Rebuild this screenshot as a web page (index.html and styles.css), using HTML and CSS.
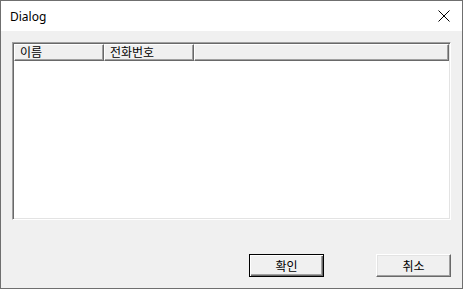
FILE: index.html
```html
<!DOCTYPE html>
<html lang="ko">
<head>
<meta charset="utf-8">
<link rel="stylesheet" href="styles.css">
</head>
<body>
<div class="window">
  <div class="titlebar">
    <span class="title">Dialog</span>
    <svg class="close" width="12" height="12" viewBox="0 0 12 12"><path d="M0.5 0.5 L11.5 11.5 M11.5 0.5 L0.5 11.5" stroke="#000" stroke-width="1" fill="none"/></svg>
  </div>
  <div class="content">
    <div class="list">
      <div class="header">
        <div class="col c1">이름</div>
        <div class="col c2">전화번호</div>
        <div class="col c3"></div>
      </div>
      <div class="rows"></div>
    </div>
    <div class="buttons">
      <button class="btn default">확인</button>
      <button class="btn">취소</button>
    </div>
  </div>
</div>
</body>
</html>
```
FILE: styles.css
```css
html, body { margin: 0; padding: 0; background: #f0f0f0; }
.window {
  width: 463px; height: 289px; box-sizing: border-box;
  border: 1px solid #6f6f6f;
  display: flex; flex-direction: column;
  font-family: "Noto Sans", "Noto Sans CJK KR", sans-serif;
}
.titlebar {
  height: 30px; background: #fff;
  display: flex; align-items: center; justify-content: space-between;
  padding: 0 12px 0 9px;
}
.title { font-size: 12px; color: #000; }
.close { display: block; }
.content {
  flex: 1; background: #f0f0f0;
  padding: 11px 11px 0 11px;
  display: flex; flex-direction: column;
}
.list {
  height: 178px; box-sizing: border-box;
  background: #fff;
  border-top: 1px solid #a0a0a0; border-left: 1px solid #a0a0a0;
  border-right: 1px solid #fff; border-bottom: 1px solid #fff;
  box-shadow: inset 1px 1px 0 #696969, inset -1px -1px 0 #e3e3e3;
  padding: 1px;
  display: flex; flex-direction: column;
}
.header { display: flex; height: 17px; background: #f0f0f0; }
.col {
  box-sizing: border-box; height: 17px;
  border-left: 1px solid #fff; border-top: 1px solid #fff;
  border-right: 1px solid #696969; border-bottom: 1px solid #696969;
  box-shadow: inset -1px -1px 0 #a0a0a0;
  font-family: "Noto Sans CJK KR", sans-serif; font-size: 12px; line-height: 14px;
  padding-left: 5px; color: #000;
}
.c1 { width: 90px; }
.c2 { width: 90px; }
.c3 { flex: 1; }
.rows { flex: 1; }
.buttons {
  display: flex; justify-content: flex-end; gap: 52px;
  margin-top: 34px;
}
.btn {
  width: 75px; height: 23px; box-sizing: border-box; margin: 0; padding: 0;
  background: #f0f0f0;
  border-top: 1px solid #fff; border-left: 1px solid #fff;
  border-right: 1px solid #696969; border-bottom: 1px solid #696969;
  box-shadow: inset -1px -1px 0 #a0a0a0, inset 1px 1px 0 #e3e3e3;
  font-family: "Noto Sans CJK KR", sans-serif; font-size: 12px; color: #000;
}
.btn.default {
  border: 1px solid #000;
  box-shadow: inset 1px 1px 0 #fff, inset -1px -1px 0 #696969, inset -2px -2px 0 #a0a0a0;
}
```
